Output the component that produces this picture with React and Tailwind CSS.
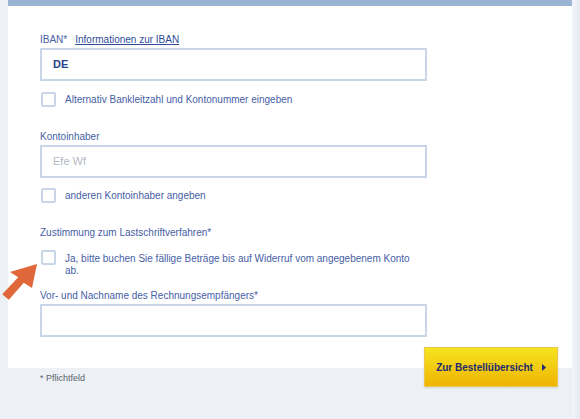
import React from 'react';

function Checkbox() {
  return <div className="w-[15px] h-[15px] shrink-0 border-2 border-[#c9d6e8] rounded-[2px] bg-white ml-px" />;
}

function TextInput({ value, placeholder, bold }) {
  return (
    <div className="w-[387px] h-[33px] border-2 border-[#c9d6e8] bg-white flex items-center px-[11px]">
      {value ? (
        <span className={`text-[11px] text-[#27408b] ${bold ? 'font-bold' : ''}`}>{value}</span>
      ) : (
        <span className="text-[11px] text-[#b3b9c4]">{placeholder}</span>
      )}
    </div>
  );
}

export default function App() {
  return (
    <div
      className="w-[580px] h-[419px] bg-[#edf1f6] overflow-hidden flex"
      style={{ fontFamily: '"Liberation Sans", Arial, sans-serif' }}
    >
      <div className="w-[8px] shrink-0" />
      <div className="w-[564px] shrink-0 flex flex-col">
        {/* Form panel */}
        <div className="relative bg-white border-t-[6px] border-[#9ab5d4] pt-[28px] pb-[31px] px-[32px]">
          {/* IBAN */}
          <div className="h-[12px] leading-[12px] text-[10px] text-[#4760a6] flex gap-[8px] mb-[2px]">
            <span>IBAN*</span>
            <span className="underline text-[#2f4b98]">Informationen zur IBAN</span>
          </div>
          <TextInput value="DE" bold />
          <div className="mt-[11px] h-[15px] flex items-center gap-[9px]">
            <Checkbox />
            <span className="text-[10px] text-[#4760a6]">Alternativ Bankleitzahl und Kontonummer eingeben</span>
          </div>

          {/* Kontoinhaber */}
          <div className="mt-[24px] h-[12px] leading-[12px] text-[10px] text-[#4760a6] mb-[2px]">Kontoinhaber</div>
          <TextInput placeholder="Efe Wf" />
          <div className="mt-[10px] h-[15px] flex items-center gap-[9px]">
            <Checkbox />
            <span className="text-[10px] text-[#4760a6]">anderen Kontoinhaber angeben</span>
          </div>

          {/* Zustimmung */}
          <div className="mt-[24px] h-[12px] leading-[12px] text-[10px] text-[#4760a6]">Zustimmung zum Lastschriftverfahren*</div>
          <div className="relative mt-[11px] flex gap-[9px]">
            <Checkbox />
            <span className="mt-[3px] text-[10px] leading-[12px] text-[#4760a6]">
              Ja, bitte buchen Sie fällige Beträge bis auf Widerruf vom angegebenem Konto
              <br />
              ab.
            </span>
            {/* Hint arrow */}
            <svg className="absolute left-[-38px] top-[12px]" width="38" height="42" viewBox="0 0 38 42">
              <path d="M35 2 L30 26 L21.8 20.8 L6.8 37.8 L0.2 32.2 L16.2 15.2 L8 10 Z" fill="#e0673a" />
            </svg>
          </div>

          {/* Rechnungsempfänger */}
          <div className="mt-[13px] h-[12px] leading-[12px] text-[10px] text-[#4760a6] mb-[2px]">
            Vor- und Nachname des Rechnungsempfängers*
          </div>
          <TextInput placeholder="" />

          {/* Submit */}
          <button className="absolute right-[14px] bottom-[-19px] w-[134px] h-[40px] flex items-center justify-center gap-[9px] bg-gradient-to-b from-[#f5e41f] to-[#efb400] border border-[#ecc94a] shadow-[0_1px_2px_rgba(0,0,0,0.12)]">
            <span className="text-[10px] font-bold text-[#1e2a6e]">Zur Bestellübersicht</span>
            <svg width="4" height="7" viewBox="0 0 4 7">
              <path d="M0 0 L4 3.5 L0 7 Z" fill="#1e2a6e" />
            </svg>
          </button>
        </div>

        <div className="pt-[5px] pl-[32px] text-[9px] leading-[10px] text-[#5c626b]">* Pflichtfeld</div>
      </div>
      <div className="w-[8px] shrink-0 bg-gradient-to-r from-[#f4f6fa] to-[#e4e9f2]" />
    </div>
  );
}
